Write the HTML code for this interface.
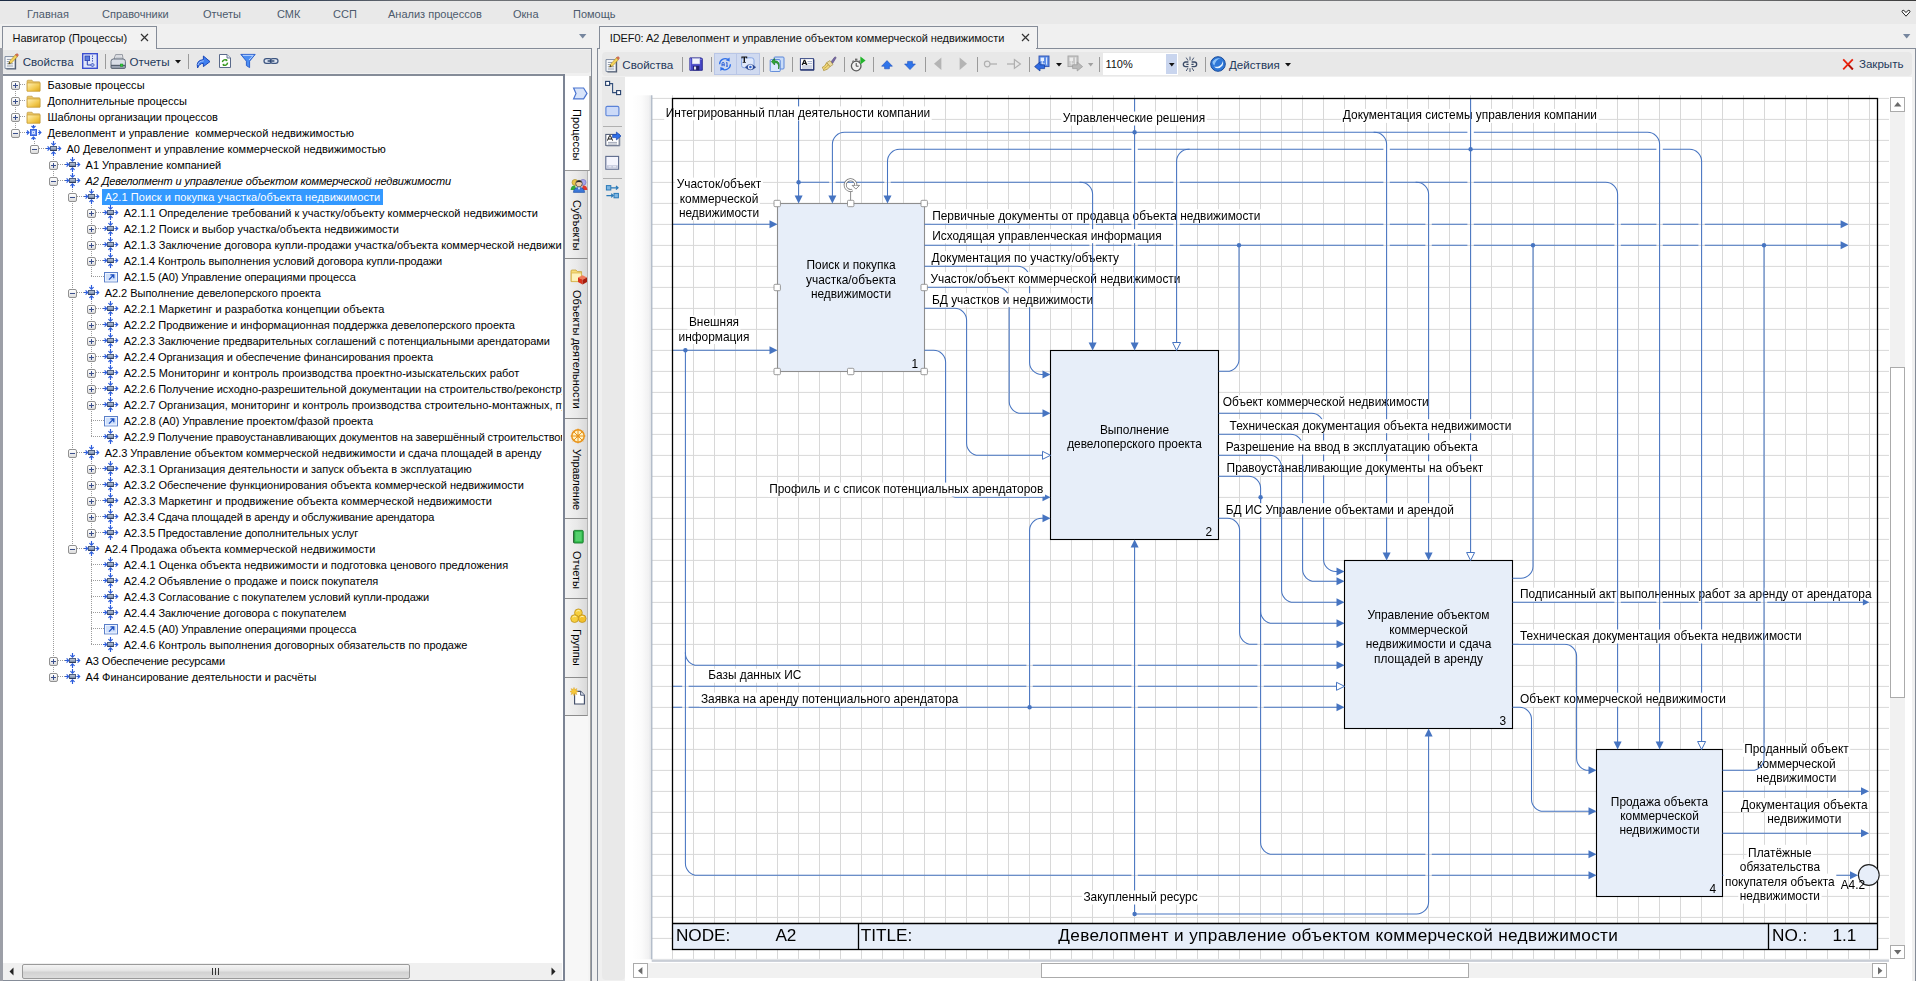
<!DOCTYPE html><html lang="ru"><head><meta charset="utf-8"><title>IDEF0</title><style>

*{box-sizing:border-box;margin:0;padding:0}
html,body{width:1916px;height:981px;overflow:hidden}
body{position:relative;background:#f0f0f0;font-family:"Liberation Sans",Arial,sans-serif;font-size:11px;color:#000;line-height:13px}
.a{position:absolute}
.t{position:absolute;white-space:pre;line-height:13px;height:13px}
.menu{color:#4c5a6c}
.tb{color:#1e395b;font-size:11.6px}
.sep{position:absolute;width:1px;background:#9a9a9a}
.row{position:absolute;left:0;height:16px;white-space:pre}
.ex{position:absolute;width:9px;height:9px;border:1px solid #919191;border-radius:2px;background:linear-gradient(#fff,#dcdcdc)}
.ex:before{content:"";position:absolute;left:1px;top:3px;width:5px;height:1px;background:#3a4f8c}
.ex.p:after{content:"";position:absolute;left:3px;top:1px;width:1px;height:5px;background:#3a4f8c}
.hd{position:absolute;height:1px;background-image:linear-gradient(90deg,#9c9c9c 50%,transparent 50%);background-size:2px 1px}
.vd{position:absolute;width:1px;background-image:linear-gradient(#9c9c9c 50%,transparent 50%);background-size:1px 2px}
.vt{position:absolute;left:565px;width:23px;border-bottom:1.5px solid #8c8c8c;border-right:1px solid #b4b4b4;background:linear-gradient(90deg,#f3f3f3,#e9e9e9 55%,#d9d9d9)}
.vtx{position:absolute;left:569.6px;width:13px;writing-mode:vertical-rl;white-space:pre;line-height:13px;font-size:11px}
.sb{position:absolute;background:#fff;border:1px solid #ababab}

</style></head><body>
<div class="a" style="left:0;top:0;width:1916px;height:24px;background:#e9e9e9"></div><div class="a" style="left:0;top:0;width:1916px;height:1.3px;background:linear-gradient(90deg,#1c2c44 0,#2b3a50 280px,#6d7075 420px,#77787a 1700px,#3a3a3a 1916px)"></div><div class="t menu" style="left:27px;top:8px">Главная</div><div class="t menu" style="left:102px;top:8px">Справочники</div><div class="t menu" style="left:203px;top:8px">Отчеты</div><div class="t menu" style="left:277px;top:8px">СМК</div><div class="t menu" style="left:333px;top:8px">ССП</div><div class="t menu" style="left:388px;top:8px">Анализ процессов</div><div class="t menu" style="left:513px;top:8px">Окна</div><div class="t menu" style="left:573px;top:8px">Помощь</div><svg class="a" style="left:1900.6px;top:9px" width="10" height="9" viewBox="0 0 10 9"><path d="M1 2.8Q1 .9 2.8 1.4L5 3.5 7.2 1.4Q9 .9 9 2.8L5 7.2Z" fill="#fff" stroke="#222" stroke-width="1"/></svg>
<div class="a" style="left:2px;top:26px;width:155px;height:24px;border:1.3px solid #858c98;border-bottom:none;background:#f2f2f2"></div><div class="t" style="left:12.5px;top:31.5px;color:#111">Навигатор (Процессы)</div><svg class="a" style="left:140px;top:33px" width="9" height="9"><path d="M1 1L8 8M8 1L1 8" stroke="#333" stroke-width="1.2"/></svg><svg class="a" style="left:578.5px;top:33.6px" width="8" height="5"><path d="M0 0H7.4L3.7 4.4Z" fill="#76869e"/></svg><div class="a" style="left:598.6px;top:26px;width:439px;height:24px;border:1.3px solid #858c98;border-bottom:none;background:#f2f2f2"></div><div class="t" style="left:609.7px;top:31.5px;color:#111;letter-spacing:-0.06px">IDEF0: A2 Девелопмент и управление объектом коммерческой недвижимости</div><svg class="a" style="left:1021px;top:33px" width="9" height="9"><path d="M1 1L8 8M8 1L1 8" stroke="#333" stroke-width="1.2"/></svg><svg class="a" style="left:1902.8px;top:33.6px" width="8" height="5"><path d="M0 0H7.4L3.7 4.4Z" fill="#76869e"/></svg>
<div class="a" style="left:1.5px;top:48.3px;width:590.5px;height:940px;border:1.4px solid #858c98;border-left-width:1.5px;background:#f0f0f0"></div><div class="a" style="left:3.3px;top:47px;width:152.4px;height:3px;background:#f2f2f2"></div><div class="a" style="left:3px;top:49.7px;width:587.5px;height:23.8px;background:#e8e8e8;border-radius:0 0 4px 0"></div><div class="a" style="left:596.8px;top:48.3px;width:1319px;height:940px;border:1.4px solid #858c98;background:#f0f0f0"></div><div class="a" style="left:599.9px;top:47px;width:436.4px;height:3px;background:#f2f2f2"></div><div class="a" style="left:601.5px;top:52px;width:1310.5px;height:24.3px;background:#e8e8e8;border-radius:4px"></div><div class="a" style="left:601.5px;top:76.6px;width:23px;height:903px;background:#e9e9e9;border-radius:0 0 4px 4px"></div><div class="a" style="left:624.5px;top:76.6px;width:1287.5px;height:905px;background:#fff"></div>
<svg class="a" style="left:4.2px;top:52.7px" width="16" height="17" viewBox="0 0 16 17"><path d="M1 3.6H11V15.4H1Z" fill="#fbfcfe" stroke="#7d8aa0" stroke-width="1"/><path d="M11.6 5V16H2.4" stroke="#4f5a6e" stroke-width="1.1" fill="none"/><path d="M2.8 6.4H7M2.8 8.6H6M2.8 10.8H9.2M2.8 13H9.2" stroke="#8e98a8" stroke-width="1"/><path d="M4.6 11L5.6 8.2L11.4 1.8L13.4 3.6L7.6 10Z" fill="#f3d25c" stroke="#a8841c" stroke-width=".6"/><path d="M11.4 1.8L12.2 1Q13.2 .4 14 1.2Q14.6 2 14 2.9L13.4 3.6Z" fill="#e2775a" stroke="#a8482c" stroke-width=".5"/><path d="M4.6 11L5.3 9L6.6 10.2Z" fill="#222"/></svg><div class="t tb" style="left:22.7px;top:54.5px">Свойства</div><svg class="a" style="left:81.8px;top:52.9px" width="16" height="16" viewBox="0 0 16 16"><rect x=".7" y=".7" width="14.6" height="14.6" fill="#dfe6fa" stroke="#3a4fd0" stroke-width="1.4"/><rect x="3" y="3" width="4.6" height="4.6" fill="#5c7fe0" stroke="#2a3fb0" stroke-width=".8"/><path d="M5.3 7.6V12H9" stroke="#2a3fb0" stroke-width="1" fill="none"/><path d="M10.5 2.5V9" stroke="#2a3fb0" stroke-width="1" stroke-dasharray="1.2 1.2"/><path d="M10.5 10L12.4 12L10.5 14L8.6 12Z" fill="#9db3f0" stroke="#2a3fb0" stroke-width=".7"/></svg><div class="sep" style="left:105px;top:54px;height:15px"></div><svg class="a" style="left:109.7px;top:53px" width="16" height="16" viewBox="0 0 16 16"><path d="M4 6L5.6 1.6H12.4L13 6Z" fill="#fafafa" stroke="#7a808c" stroke-width=".8"/><path d="M5.8 3H11.6M5.4 4.4H12" stroke="#aab0bc" stroke-width=".7"/><path d="M1 8.4Q1 6 3.4 6H13Q15.4 6 15.4 8.4V12.4H1Z" fill="#d9dde6" stroke="#5a6474" stroke-width=".9"/><path d="M1 12.4H15.4V14.4Q15.4 15.4 14.4 15.4H2Q1 15.4 1 14.4Z" fill="#9aa2b2" stroke="#4a5464" stroke-width=".9"/><rect x="10.3" y="11" width="2.6" height="2.4" fill="#2fd03a" stroke="#178a20" stroke-width=".5"/></svg><div class="t tb" style="left:129.4px;top:54.5px">Отчеты</div><svg class="a" style="left:175px;top:60px" width="7" height="4"><path d="M0 0H6L3 3.4Z" fill="#111"/></svg><div class="sep" style="left:188px;top:54px;height:15px"></div><svg class="a" style="left:194.5px;top:52.5px" width="16" height="16" viewBox="0 0 16 16"><path d="M2.6 15Q0.6 7.4 8.4 6.6V3L15 8.6L8.4 13.6V10.4Q4.4 10.2 2.6 15Z" fill="#3f7ff0" stroke="#1b47b8" stroke-width="1"/><path d="M3 12Q3.4 8.4 8.8 7.8" stroke="#a9c8ff" stroke-width="1" fill="none"/></svg><svg class="a" style="left:216.5px;top:53px" width="16" height="16" viewBox="0 0 16 16"><path d="M2.5 1.5H10L13.5 5V14.5H2.5Z" fill="#fff" stroke="#5a6a8a" stroke-width="1"/><path d="M10 1.5V5H13.5" fill="#e4e9f4" stroke="#5a6a8a" stroke-width=".9"/><path d="M5.4 9.2A2.8 2.8 0 0 1 10 7.4M10.6 9.6A2.8 2.8 0 0 1 6 11.6" stroke="#3a9a22" stroke-width="1.4" fill="none"/><path d="M9 6L10.8 7.6L8.8 8.6Z M7 13L5.2 11.4L7.2 10.4Z" fill="#3a9a22"/></svg><svg class="a" style="left:240.2px;top:53px" width="16" height="16" viewBox="0 0 16 16"><path d="M.8 1.4H15.2L9.6 8.2V14.6L6.4 12.6V8.2Z" fill="#4b8df2" stroke="#2458c8" stroke-width=".9"/><path d="M2.8 2.4H13.2L9 7" stroke="#b9d4ff" stroke-width="1" fill="none"/></svg><svg class="a" style="left:262.6px;top:53px" width="16" height="16" viewBox="0 0 16 16"><g fill="#dfe6f2" stroke="#3e5680" stroke-width="1.25"><rect x="1" y="5.6" width="7.6" height="4.8" rx="2.4"/><rect x="7.4" y="5.6" width="7.6" height="4.8" rx="2.4"/></g><path d="M4.6 8H11.4" stroke="#27406a" stroke-width="1.4"/></svg>
<svg width="0" height="0" style="position:absolute"><defs>
<linearGradient id="fg" x1="0" y1="0" x2="1" y2="1"><stop offset="0" stop-color="#fff1b8"/><stop offset=".6" stop-color="#f2c94e"/><stop offset="1" stop-color="#d9a520"/></linearGradient>
<g id="i-folder" transform="translate(0,1.6)"><path d="M1 2.6Q1 1.6 2 1.6H6L7.4 3.2H13.4Q14 3.2 14 4V12.4H1Z" fill="#e8c465" stroke="#b8923a" stroke-width=".6"/><path d="M1.2 4.4H14V12.6H1.2Z" fill="url(#fg)" stroke="#c89a2c" stroke-width=".6"/></g>
<linearGradient id="pg" x1="0" y1="0" x2="0" y2="1"><stop offset="0" stop-color="#c5cfdf"/><stop offset="1" stop-color="#6d7f9e"/></linearGradient>
<g id="i-proc" stroke="#2b5cdc" fill="none" stroke-width="1.15" stroke-linejoin="miter"><rect x="4.5" y="5.5" width="6" height="4" fill="url(#pg)" stroke="#4e5f80" stroke-width="1"/><path d="M4.5 9.5H10.5" stroke="#2d3c5c" stroke-width="1"/><path d="M0 7.5H3.6M1.6 5.4L3.7 7.5L1.6 9.6"/><path d="M11.4 7.5H15M12.6 5.4L14.7 7.5L12.6 9.6"/><path d="M7.5 0V4.2M5.4 2.2L7.5 4.3L9.6 2.2"/><path d="M7.5 15V10.8M5.4 12.8L7.5 10.7L9.6 12.8"/></g>
<g id="i-model" stroke="#2b5cdc" fill="none" stroke-width="1.15"><rect x="4.5" y="4.5" width="6" height="6" fill="#6a8eec" stroke="#3a63dc" stroke-width="1"/><rect x="6.5" y="6.5" width="2" height="2" fill="#6a8eec" stroke="#d6e2fd" stroke-width="1"/><path d="M0 7.5H3M1 5.5L3 7.5L1 9.5"/><path d="M12 7.5H15M12.8 5.4L14.9 7.5L12.8 9.6"/><path d="M7.5 0V3M5.5 1L7.5 3L9.5 1"/><path d="M7.5 15V12M5.5 14L7.5 12L9.5 14"/></g>
<g id="i-link"><rect x="1.5" y="3.5" width="13" height="9.4" fill="#cfe0fb" stroke="#5a7fc8" stroke-width="1"/><rect x="2.5" y="4.5" width="11" height="7.4" fill="none" stroke="#eef4ff" stroke-width="1"/><path d="M6 10.6L10.6 6M7.4 5.8H10.8V9.2" stroke="#1d4fc0" stroke-width="1.3" fill="none"/></g>
</defs></svg><div class="a" style="left:0px;top:73.6px;width:565px;height:2.4px;background:#858c98"></div><div class="a" style="left:563.4px;top:74px;width:1.6px;height:907px;background:#7c8494"></div><div class="a" style="left:0px;top:979.6px;width:565px;height:1.4px;background:#858c98"></div><div class="a" style="left:0px;top:48px;width:2.6px;height:933px;background:#9c9fa7"></div><div class="a" style="left:3px;top:76px;width:560.4px;height:903.6px;background:#fff"></div><div class="a" style="left:3px;top:76px;width:558.7px;height:903.6px;background:#fff;overflow:hidden"><div class="a" style="left:-3px;top:-76px;width:566px;height:906px"><div class="vd" style="left:34px;top:141px;height:8px"></div><div class="vd" style="left:53px;top:157px;height:520px"></div><div class="vd" style="left:72px;top:189px;height:360px"></div><div class="vd" style="left:91px;top:205px;height:72px"></div><div class="vd" style="left:91px;top:301px;height:136px"></div><div class="vd" style="left:91px;top:461px;height:72px"></div><div class="vd" style="left:91px;top:557px;height:88px"></div><div class="vd" style="left:15px;top:85px;height:48px"></div><div class="hd" style="left:20px;top:84px;width:6px"></div><div class="ex p" style="left:11px;top:81px"></div><svg class="a" style="left:26px;top:77px" width="16" height="16"><use href="#i-folder"/></svg><div class="t" style="left:47.5px;top:78.5px;letter-spacing:0.033px;">Базовые процессы</div><div class="hd" style="left:20px;top:100px;width:6px"></div><div class="ex p" style="left:11px;top:97px"></div><svg class="a" style="left:26px;top:93px" width="16" height="16"><use href="#i-folder"/></svg><div class="t" style="left:47.5px;top:94.5px;letter-spacing:-0.010px;">Дополнительные процессы</div><div class="hd" style="left:20px;top:116px;width:6px"></div><div class="ex p" style="left:11px;top:113px"></div><svg class="a" style="left:26px;top:109px" width="16" height="16"><use href="#i-folder"/></svg><div class="t" style="left:47.5px;top:110.5px;letter-spacing:-0.074px;">Шаблоны организации процессов</div><div class="hd" style="left:20px;top:132px;width:8px"></div><div class="ex" style="left:11px;top:129px"></div><svg class="a" style="left:26px;top:125px" width="16" height="16"><use href="#i-model"/></svg><div class="t" style="left:47.5px;top:126.5px;letter-spacing:0.032px;">Девелопмент и управление  коммерческой недвижимостью</div><div class="hd" style="left:39px;top:148px;width:8px"></div><div class="ex" style="left:30px;top:145px"></div><svg class="a" style="left:46px;top:141px" width="16" height="16"><use href="#i-proc"/></svg><div class="t" style="left:66.5px;top:142.5px;letter-spacing:0.020px;">A0 Девелопмент и управление коммерческой недвижимостью</div><div class="hd" style="left:58px;top:164px;width:8px"></div><div class="ex p" style="left:49px;top:161px"></div><svg class="a" style="left:65px;top:157px" width="16" height="16"><use href="#i-proc"/></svg><div class="t" style="left:85.6px;top:158.5px;letter-spacing:-0.013px;">A1 Управление компанией</div><div class="hd" style="left:58px;top:180px;width:8px"></div><div class="ex" style="left:49px;top:177px"></div><svg class="a" style="left:65px;top:173px" width="16" height="16"><use href="#i-proc"/></svg><div class="t" style="left:85.6px;top:174.5px;letter-spacing:-0.136px;font-style:italic;">A2 Девелопмент и управление объектом коммерческой недвижимости</div><div class="hd" style="left:77px;top:196px;width:8px"></div><div class="ex" style="left:68px;top:193px"></div><svg class="a" style="left:84px;top:189px" width="16" height="16"><use href="#i-proc"/></svg><div class="t" style="left:102.1px;top:189.0px;letter-spacing:0.084px;color:#fff;background:#3399ff;padding:1.5px 2.6px 1.5px 2.6px;height:16px;">A2.1 Поиск и покупка участка/объекта недвижимости</div><div class="hd" style="left:96px;top:212px;width:8px"></div><div class="ex p" style="left:87px;top:209px"></div><svg class="a" style="left:103px;top:205px" width="16" height="16"><use href="#i-proc"/></svg><div class="t" style="left:123.7px;top:206.5px;letter-spacing:0.014px;">A2.1.1 Определение требований к участку/объекту коммерческой недвижимости</div><div class="hd" style="left:96px;top:228px;width:8px"></div><div class="ex p" style="left:87px;top:225px"></div><svg class="a" style="left:103px;top:221px" width="16" height="16"><use href="#i-proc"/></svg><div class="t" style="left:123.7px;top:222.5px;letter-spacing:0.038px;">A2.1.2 Поиск и выбор участка/объекта недвижимости</div><div class="hd" style="left:96px;top:244px;width:8px"></div><div class="ex p" style="left:87px;top:241px"></div><svg class="a" style="left:103px;top:237px" width="16" height="16"><use href="#i-proc"/></svg><div class="t" style="left:123.7px;top:238.5px;letter-spacing:0.034px;">A2.1.3 Заключение договора купли-продажи участка/объекта коммерческой недвижимости</div><div class="hd" style="left:96px;top:260px;width:8px"></div><div class="ex p" style="left:87px;top:257px"></div><svg class="a" style="left:103px;top:253px" width="16" height="16"><use href="#i-proc"/></svg><div class="t" style="left:123.7px;top:254.5px;letter-spacing:-0.062px;">A2.1.4 Контроль выполнения условий договора купли-продажи</div><div class="hd" style="left:91px;top:276px;width:13px"></div><svg class="a" style="left:103px;top:269px" width="16" height="16"><use href="#i-link"/></svg><div class="t" style="left:123.7px;top:270.5px;letter-spacing:-0.095px;">A2.1.5 (A0) Управление операциями процесса</div><div class="hd" style="left:77px;top:292px;width:8px"></div><div class="ex" style="left:68px;top:289px"></div><svg class="a" style="left:84px;top:285px" width="16" height="16"><use href="#i-proc"/></svg><div class="t" style="left:104.7px;top:286.5px;letter-spacing:-0.033px;">A2.2 Выполнение девелоперского проекта</div><div class="hd" style="left:96px;top:308px;width:8px"></div><div class="ex p" style="left:87px;top:305px"></div><svg class="a" style="left:103px;top:301px" width="16" height="16"><use href="#i-proc"/></svg><div class="t" style="left:123.7px;top:302.5px;letter-spacing:0.024px;">A2.2.1 Маркетинг и разработка концепции объекта</div><div class="hd" style="left:96px;top:324px;width:8px"></div><div class="ex p" style="left:87px;top:321px"></div><svg class="a" style="left:103px;top:317px" width="16" height="16"><use href="#i-proc"/></svg><div class="t" style="left:123.7px;top:318.5px;letter-spacing:-0.032px;">A2.2.2 Продвижение и информационная поддержка девелоперского проекта</div><div class="hd" style="left:96px;top:340px;width:8px"></div><div class="ex p" style="left:87px;top:337px"></div><svg class="a" style="left:103px;top:333px" width="16" height="16"><use href="#i-proc"/></svg><div class="t" style="left:123.7px;top:334.5px;letter-spacing:-0.066px;">A2.2.3 Заключение предварительных соглашений с потенциальными арендаторами</div><div class="hd" style="left:96px;top:356px;width:8px"></div><div class="ex p" style="left:87px;top:353px"></div><svg class="a" style="left:103px;top:349px" width="16" height="16"><use href="#i-proc"/></svg><div class="t" style="left:123.7px;top:350.5px;letter-spacing:-0.068px;">A2.2.4 Организация и обеспечение финансирования проекта</div><div class="hd" style="left:96px;top:372px;width:8px"></div><div class="ex p" style="left:87px;top:369px"></div><svg class="a" style="left:103px;top:365px" width="16" height="16"><use href="#i-proc"/></svg><div class="t" style="left:123.7px;top:366.5px;letter-spacing:0.034px;">A2.2.5 Мониторинг и контроль производства проектно-изыскательских работ</div><div class="hd" style="left:96px;top:388px;width:8px"></div><div class="ex p" style="left:87px;top:385px"></div><svg class="a" style="left:103px;top:381px" width="16" height="16"><use href="#i-proc"/></svg><div class="t" style="left:123.7px;top:382.5px;letter-spacing:-0.043px;">A2.2.6 Получение исходно-разрешительной документации на строительство/реконструкцию</div><div class="hd" style="left:96px;top:404px;width:8px"></div><div class="ex p" style="left:87px;top:401px"></div><svg class="a" style="left:103px;top:397px" width="16" height="16"><use href="#i-proc"/></svg><div class="t" style="left:123.7px;top:398.5px;letter-spacing:-0.006px;">A2.2.7 Организация, мониторинг и контроль производства строительно-монтажных, пусконаладочных работ</div><div class="hd" style="left:91px;top:420px;width:13px"></div><svg class="a" style="left:103px;top:413px" width="16" height="16"><use href="#i-link"/></svg><div class="t" style="left:123.7px;top:414.5px;letter-spacing:0.001px;">A2.2.8 (A0) Управление проектом/фазой проекта</div><div class="hd" style="left:91px;top:436px;width:13px"></div><svg class="a" style="left:103px;top:429px" width="16" height="16"><use href="#i-proc"/></svg><div class="t" style="left:123.7px;top:430.5px;letter-spacing:-0.109px;">A2.2.9 Получение правоустанавливающих документов на завершённый строительством объект</div><div class="hd" style="left:77px;top:452px;width:8px"></div><div class="ex" style="left:68px;top:449px"></div><svg class="a" style="left:84px;top:445px" width="16" height="16"><use href="#i-proc"/></svg><div class="t" style="left:104.7px;top:446.5px;letter-spacing:-0.007px;">A2.3 Управление объектом коммерческой недвижимости и сдача площадей в аренду</div><div class="hd" style="left:96px;top:468px;width:8px"></div><div class="ex p" style="left:87px;top:465px"></div><svg class="a" style="left:103px;top:461px" width="16" height="16"><use href="#i-proc"/></svg><div class="t" style="left:123.7px;top:462.5px;letter-spacing:0.018px;">A2.3.1 Организация деятельности и запуск объекта в эксплуатацию</div><div class="hd" style="left:96px;top:484px;width:8px"></div><div class="ex p" style="left:87px;top:481px"></div><svg class="a" style="left:103px;top:477px" width="16" height="16"><use href="#i-proc"/></svg><div class="t" style="left:123.7px;top:478.5px;letter-spacing:-0.021px;">A2.3.2 Обеспечение функционирования объекта коммерческой недвижимости</div><div class="hd" style="left:96px;top:500px;width:8px"></div><div class="ex p" style="left:87px;top:497px"></div><svg class="a" style="left:103px;top:493px" width="16" height="16"><use href="#i-proc"/></svg><div class="t" style="left:123.7px;top:494.5px;letter-spacing:0.038px;">A2.3.3 Маркетинг и продвижение объекта коммерческой недвижимости</div><div class="hd" style="left:96px;top:516px;width:8px"></div><div class="ex p" style="left:87px;top:513px"></div><svg class="a" style="left:103px;top:509px" width="16" height="16"><use href="#i-proc"/></svg><div class="t" style="left:123.7px;top:510.5px;letter-spacing:-0.164px;">A2.3.4 Сдача площадей в аренду и обслуживание арендатора</div><div class="hd" style="left:96px;top:532px;width:8px"></div><div class="ex p" style="left:87px;top:529px"></div><svg class="a" style="left:103px;top:525px" width="16" height="16"><use href="#i-proc"/></svg><div class="t" style="left:123.7px;top:526.5px;letter-spacing:-0.098px;">A2.3.5 Предоставление дополнительных услуг</div><div class="hd" style="left:77px;top:548px;width:8px"></div><div class="ex" style="left:68px;top:545px"></div><svg class="a" style="left:84px;top:541px" width="16" height="16"><use href="#i-proc"/></svg><div class="t" style="left:104.7px;top:542.5px;letter-spacing:0.042px;">A2.4 Продажа объекта коммерческой недвижимости</div><div class="hd" style="left:91px;top:564px;width:13px"></div><svg class="a" style="left:103px;top:557px" width="16" height="16"><use href="#i-proc"/></svg><div class="t" style="left:123.7px;top:558.5px;letter-spacing:0.016px;">A2.4.1 Оценка объекта недвижимости и подготовка ценового предложения</div><div class="hd" style="left:91px;top:580px;width:13px"></div><svg class="a" style="left:103px;top:573px" width="16" height="16"><use href="#i-proc"/></svg><div class="t" style="left:123.7px;top:574.5px;letter-spacing:-0.032px;">A2.4.2 Объявление о продаже и поиск покупателя</div><div class="hd" style="left:91px;top:596px;width:13px"></div><svg class="a" style="left:103px;top:589px" width="16" height="16"><use href="#i-proc"/></svg><div class="t" style="left:123.7px;top:590.5px;letter-spacing:-0.050px;">A2.4.3 Согласование с покупателем условий купли-продажи</div><div class="hd" style="left:91px;top:612px;width:13px"></div><svg class="a" style="left:103px;top:605px" width="16" height="16"><use href="#i-proc"/></svg><div class="t" style="left:123.7px;top:606.5px;letter-spacing:-0.024px;">A2.4.4 Заключение договора с покупателем</div><div class="hd" style="left:91px;top:628px;width:13px"></div><svg class="a" style="left:103px;top:621px" width="16" height="16"><use href="#i-link"/></svg><div class="t" style="left:123.7px;top:622.5px;letter-spacing:-0.084px;">A2.4.5 (A0) Управление операциями процесса</div><div class="hd" style="left:91px;top:644px;width:13px"></div><svg class="a" style="left:103px;top:637px" width="16" height="16"><use href="#i-proc"/></svg><div class="t" style="left:123.7px;top:638.5px;letter-spacing:-0.012px;">A2.4.6 Контроль выполнения договорных обязательств по продаже</div><div class="hd" style="left:58px;top:660px;width:8px"></div><div class="ex p" style="left:49px;top:657px"></div><svg class="a" style="left:65px;top:653px" width="16" height="16"><use href="#i-proc"/></svg><div class="t" style="left:85.6px;top:654.5px;letter-spacing:-0.124px;">A3 Обеспечение ресурсами</div><div class="hd" style="left:58px;top:676px;width:8px"></div><div class="ex p" style="left:49px;top:673px"></div><svg class="a" style="left:65px;top:669px" width="16" height="16"><use href="#i-proc"/></svg><div class="t" style="left:85.6px;top:670.5px;letter-spacing:-0.014px;">A4 Финансирование деятельности и расчёты</div></div><div class="a" style="left:0;top:887px;width:561px;height:16.6px;background:#f0f0f0"></div><svg class="a" style="left:6px;top:890.6px" width="5" height="9"><path d="M4.5 0.5V8.5L0.5 4.5Z" fill="#222"/></svg><svg class="a" style="left:548px;top:890.6px" width="5" height="9"><path d="M0.5 0.5V8.5L4.5 4.5Z" fill="#222"/></svg><div class="a" style="left:19px;top:888px;width:388px;height:14.6px;border:1px solid #9a9a9a;border-radius:2px;background:linear-gradient(#f4f4f4,#e4e4e4 45%,#d2d2d2 55%,#dcdcdc)"></div><div class="a" style="left:209px;top:891.6px;width:7px;height:7px;background:linear-gradient(90deg,#333 1px,transparent 1px) 0 0/3px 7px"></div></div>
<div class="a" style="left:565px;top:76px;width:25.6px;height:905px;background:#f4f4f4"></div><div class="a" style="left:589.8px;top:76px;width:1.2px;height:905px;background:#a4a4a4"></div><div class="a" style="left:565px;top:76px;width:25.4px;height:94.6px;background:#fff;border-right:1px solid #b4b4b4;border-bottom:1.4px solid #9a9a9a"></div><div class="vt" style="top:170.6px;height:88.4px"></div><div class="vt" style="top:259px;height:160px"></div><div class="vt" style="top:419px;height:100px"></div><div class="vt" style="top:519px;height:80px"></div><div class="vt" style="top:599px;height:79.2px"></div><div class="vt" style="top:678.2px;height:38.2px"></div><div class="a" style="left:565px;top:716.4px;width:23px;height:300px;background:#f7f7f7"></div><div class="vtx" style="top:109.2px">Процессы</div><div class="vtx" style="top:200px">Субъекты</div><div class="vtx" style="top:290.3px">Объекты деятельности</div><div class="vtx" style="top:448.5px">Управление</div><div class="vtx" style="top:551px">Отчеты</div><div class="vtx" style="top:629.2px">Группы</div><svg class="a" style="left:571.5px;top:86px" width="16" height="15" viewBox="0 0 16 15"><path d="M1.6 2H11.6L15 7.4L11.6 12.8H1.6L4 7.4Z" fill="#d8e4fa" stroke="#4a74d0" stroke-width="1.2"/></svg><svg class="a" style="left:569.5px;top:177px" width="18" height="16" viewBox="0 0 18 16"><circle cx="5" cy="5.4" r="3" fill="#e8c44a" stroke="#a88a22" stroke-width=".6"/><circle cx="13" cy="5.4" r="3" fill="#a6a6ec" stroke="#6a6ab8" stroke-width=".6"/><path d="M0.6 13Q1 8.4 5 8.6L6.6 13Z" fill="#35a83a"/><path d="M17.4 13Q17 8.4 13 8.6L11.4 13Z" fill="#e0382c"/><circle cx="9" cy="6.6" r="3.3" fill="#f2cfa6" stroke="#333" stroke-width=".7"/><path d="M5.8 5.6Q9 1.6 12.2 5.6Q9 4.6 5.8 5.6Z" fill="#222"/><path d="M3.4 15.4Q3.6 10.4 9 10.4Q14.4 10.4 14.6 15.4Z" fill="#3c78d8" stroke="#1a4aa0" stroke-width=".6"/><path d="M7.8 10.4L9 13L10.2 10.4Z" fill="#fff"/></svg><svg class="a" style="left:569.5px;top:267.5px" width="18" height="17" viewBox="0 0 18 17"><path d="M1 3Q1 2 2 2H6L7.4 3.6H11.6V13.6H1Z" fill="#f6dc7a" stroke="#c09a2c" stroke-width=".7"/><path d="M1.4 5H11.4V13.4H1.4Z" fill="#fdf3bd" stroke="#d2aa38" stroke-width=".6"/><path d="M8 9.4L12.6 7.2L17 9.4L12.6 11.8Z" fill="#f07a5a"/><path d="M8 9.4V14L12.6 16.4V11.8Z" fill="#d8321c"/><path d="M17 9.4V14L12.6 16.4V11.8Z" fill="#a81c0c"/></svg><svg class="a" style="left:570px;top:427.5px" width="16" height="16" viewBox="0 0 16 16"><circle cx="8" cy="8" r="6.2" fill="#fff3c6" stroke="#e8941c" stroke-width="1.5"/><circle cx="8" cy="8" r="1.6" fill="#e8941c"/><path d="M8 0.6V15.4M0.6 8H15.4M2.8 2.8L13.2 13.2M13.2 2.8L2.8 13.2" stroke="#e8941c" stroke-width="1"/></svg><svg class="a" style="left:571px;top:529px" width="14" height="16" viewBox="0 0 14 16"><rect x="2.6" y="1.4" width="9.6" height="12.6" rx="1" fill="#2fb84a" stroke="#157a28" stroke-width=".9"/><path d="M4.4 3H10.6V12.2H4.4Z" fill="#55d06c"/><path d="M2 3H3.4M2 5H3.4M2 7H3.4M2 9H3.4M2 11H3.4M2 13H3.4" stroke="#333" stroke-width=".8"/></svg><svg class="a" style="left:569.5px;top:607.5px" width="17" height="16" viewBox="0 0 17 16"><g stroke="#b88a14" stroke-width=".7"><circle cx="8.4" cy="4.8" r="3.9" fill="#f6cf3e"/><circle cx="4.6" cy="10.6" r="3.9" fill="#f6cf3e"/><circle cx="12.2" cy="10.6" r="3.9" fill="#f2c02c"/></g><path d="M6.4 3.4Q8 1.8 10 3M2.6 9.2Q4.2 7.6 6.2 8.8M10.2 9.2Q11.8 7.6 13.8 8.8" stroke="#fff3b0" stroke-width="1" fill="none"/></svg><svg class="a" style="left:570px;top:686.5px" width="16" height="18" viewBox="0 0 16 18"><path d="M4.6 4.4H10.6L14.4 8.2V17H4.6Z" fill="#fff" stroke="#3e4a66" stroke-width="1.1"/><path d="M10.6 4.4V8.2H14.4" fill="#dfe6f4" stroke="#3e4a66" stroke-width=".9"/><path d="M4 0.4L4.8 2.6L7 1.6L6 3.8L8.2 4.6L6 5.4L7 7.6L4.8 6.6L4 8.8L3.2 6.6L1 7.6L2 5.4L-0.2 4.6L2 3.8L1 1.6L3.2 2.6Z" fill="#f6c83a" stroke="#d89a14" stroke-width=".4"/></svg>
<svg class="a" style="left:604.6px;top:55.5px" width="16" height="17" viewBox="0 0 16 17"><path d="M1 3.6H11V15.4H1Z" fill="#fbfcfe" stroke="#7d8aa0" stroke-width="1"/><path d="M11.6 5V16H2.4" stroke="#4f5a6e" stroke-width="1.1" fill="none"/><path d="M2.8 6.4H7M2.8 8.6H6M2.8 10.8H9.2M2.8 13H9.2" stroke="#8e98a8" stroke-width="1"/><path d="M4.6 11L5.6 8.2L11.4 1.8L13.4 3.6L7.6 10Z" fill="#f3d25c" stroke="#a8841c" stroke-width=".6"/><path d="M11.4 1.8L12.2 1Q13.2 .4 14 1.2Q14.6 2 14 2.9L13.4 3.6Z" fill="#e2775a" stroke="#a8482c" stroke-width=".5"/><path d="M4.6 11L5.3 9L6.6 10.2Z" fill="#222"/></svg><div class="t tb" style="left:622.3px;top:57.5px">Свойства</div><div class="sep" style="left:682px;top:57px;height:15px"></div><svg class="a" style="left:689px;top:56.7px" width="14.2" height="14.2" viewBox="0 0 16 16"><path d="M1 1H14L15 2V15H1Z" fill="#4848c8" stroke="#22228a" stroke-width="1"/><path d="M1.5 1.5V14.5" stroke="#8a8af0" stroke-width="1"/><rect x="3.6" y="1.6" width="8.6" height="6.2" fill="#f2f4fb" stroke="#c0c4e0" stroke-width=".5"/><rect x="4.6" y="10" width="7" height="5" fill="#20206a"/><rect x="5.6" y="10.8" width="2.4" height="3.4" fill="#e6e6f2"/><rect x="13" y="2.2" width="1" height="1" fill="#c0c0f0"/></svg><div class="sep" style="left:711px;top:57px;height:15px"></div><div class="a" style="left:714px;top:52.8px;width:45.8px;height:21.8px;background:#d0daf0;border:1px solid #b9c6e6"></div><div class="a" style="left:736.2px;top:53px;width:1px;height:21.4px;background:#b9c6e6"></div><svg class="a" style="left:717.2px;top:56px" width="16" height="16" viewBox="0 0 16 16"><path d="M2.6 8.2A5.6 5.6 0 0 1 11 3.4" stroke="#2f6fe8" stroke-width="1.3" fill="none"/><path d="M12.6 1.4L12.6 5.4L8.8 4.2Z" fill="#2f6fe8"/><path d="M13.4 8.2A5.6 5.6 0 0 1 5 13" stroke="#2f6fe8" stroke-width="1.3" fill="none"/><path d="M3.4 15L3.4 11L7.2 12.2Z" fill="#2f6fe8"/><path d="M5 10.2V7.6Q5 6.4 6.1 6.4Q7.2 6.4 7.2 7.6V10.2M5 8.8H7.2M9 7.2L10 6.4V10.2M9 10.2H11" stroke="#2a5fd8" stroke-width="1" fill="none"/></svg><svg class="a" style="left:739.6px;top:56px" width="16" height="16" viewBox="0 0 16 16"><rect x="1.6" y="1.8" width="12.4" height="10" rx="2.4" fill="#dfe8fa" stroke="#86a6e4" stroke-width="1"/><path d="M1.4 .6H7.2V2.4H6.6Q6.4 1.5 5.6 1.5H5V6H5.9V6.8H2.7V6H3.6V1.5H3Q2.2 1.5 2 2.4H1.4Z" fill="#111"/><path d="M5.4 11.2Q10.2 5.6 15.6 11.2Q10.2 16.4 5.4 11.2Z" fill="#2a4a9c" stroke="#1c3478" stroke-width=".6"/><circle cx="10.4" cy="11" r="2.5" fill="#e6eefc"/><circle cx="10.4" cy="11" r="1.3" fill="#2f62d0"/></svg><div class="sep" style="left:763px;top:57px;height:15px"></div><svg class="a" style="left:768.6px;top:55.5px" width="16" height="16" viewBox="0 0 16 16"><rect x="5" y="1" width="10" height="12" rx="1" fill="#c9dcf8" stroke="#5a86d8" stroke-width="1"/><rect x="1.2" y="3.6" width="10" height="12" rx="1" fill="#dbe8fc" stroke="#5a86d8" stroke-width="1"/><path d="M9.6 13Q10.6 6.6 5.6 6.6V9L2.4 5.6L5.6 2.6V4.8Q12 4.8 9.6 13Z" fill="#2fa836" stroke="#18751e" stroke-width=".7"/></svg><div class="sep" style="left:792px;top:57px;height:15px"></div><svg class="a" style="left:798.6px;top:56px" width="16" height="16" viewBox="0 0 16 16"><rect x="1.4" y="2.6" width="13" height="11" fill="#fff" stroke="#3a4a86" stroke-width="1"/><path d="M1.4 14.2H14.9V3.4" stroke="#1c2c6c" stroke-width="1" fill="none"/><path d="M8.6 5.6H13M8.6 7.6H13M3 10H13M3 12H13" stroke="#9aa6c4" stroke-width=".9"/><path d="M2.6 9L4.8 3.8H6.2L8.4 9H6.9L6.5 7.9H4.4L4 9ZM4.8 6.8H6.1L5.5 5.1Z" fill="#111"/></svg><svg class="a" style="left:820.6px;top:56px" width="16" height="16" viewBox="0 0 16 16"><path d="M9.6 6.4L13.6 1.2Q14.6 .6 15.2 1.6L11.4 7.8Z" fill="#7a6aa8" stroke="#4a3f70" stroke-width=".6"/><path d="M5.6 6.6L9 4.6L12 8.6L9 10.6Z" fill="#e9d9a0" stroke="#a08838" stroke-width=".6"/><path d="M1 11.6Q4 10.6 5.6 6.8L9 10.6Q6.6 14 2.6 14.6Q2.8 12.6 1 11.6Z" fill="#f0d77a" stroke="#a8892c" stroke-width=".7"/><path d="M3 12.4Q5.6 11.4 7 9" stroke="#c2a442" stroke-width=".8" fill="none"/></svg><div class="sep" style="left:844px;top:57px;height:15px"></div><svg class="a" style="left:849.8px;top:56px" width="16" height="16" viewBox="0 0 16 16"><circle cx="6.2" cy="10" r="4.8" fill="#f2f2f2" stroke="#5a5a5a" stroke-width="1.3"/><path d="M6.2 7V10.2H8.6" stroke="#444" stroke-width="1" fill="none"/><rect x="5" y="2.6" width="2.4" height="2" fill="#6a6a6a"/><path d="M2.4 5.6L3.6 4.6M10 5.6L8.8 4.6" stroke="#5a5a5a" stroke-width="1.1"/><path d="M10.4 .6L15.6 4.4L10.4 8.4Z" fill="#23b42c"/></svg><div class="sep" style="left:873px;top:57px;height:15px"></div><svg class="a" style="left:879.4px;top:56.6px" width="16" height="16" viewBox="0 0 16 16"><path d="M8 3.6L13.4 9.2H10.4V11.8H5.6V9.2H2.6Z" fill="#2f74ea" stroke="#1a4cb8" stroke-width=".6"/></svg><svg class="a" style="left:901.6px;top:56.6px" width="16" height="16" viewBox="0 0 16 16"><path d="M8 12.6L13.4 7H10.4V4.4H5.6V7H2.6Z" fill="#2f74ea" stroke="#1a4cb8" stroke-width=".6"/></svg><div class="sep" style="left:925px;top:57px;height:15px"></div><svg class="a" style="left:930px;top:56px" width="16" height="16" viewBox="0 0 16 16"><path d="M11.4 1.6V14L4 7.8Z" fill="#b4b4b4"/></svg><svg class="a" style="left:955px;top:56px" width="16" height="16" viewBox="0 0 16 16"><path d="M4.6 1.6V14L12 7.8Z" fill="#b4b4b4"/></svg><div class="sep" style="left:977px;top:57px;height:15px"></div><svg class="a" style="left:983.4px;top:56px" width="16" height="16" viewBox="0 0 16 16"><circle cx="4.2" cy="8" r="2.8" fill="none" stroke="#b0b0b0" stroke-width="1.2"/><path d="M7 8H14" stroke="#b0b0b0" stroke-width="1.3"/></svg><svg class="a" style="left:1005.6px;top:56px" width="16" height="16" viewBox="0 0 16 16"><path d="M1 8H8.6" stroke="#b0b0b0" stroke-width="1.3"/><path d="M8.4 3.6L14.4 8L8.4 12.4Z" fill="none" stroke="#b0b0b0" stroke-width="1.2"/></svg><div class="sep" style="left:1029px;top:57px;height:15px"></div><svg class="a" style="left:1033.6px;top:55.4px" width="16" height="17" viewBox="0 0 16 17"><rect x="5" y="1" width="10" height="10.6" fill="#5f8fe8" stroke="#2c50b0" stroke-width=".9"/><rect x="6.6" y="2.6" width="3.4" height="3.4" fill="#e8f0ff"/><path d="M8.2 6V9H11M12.6 2.4V9.6" stroke="#e8f0ff" stroke-width="1" fill="none"/><path d="M.6 11.6L6 7V9.8H10.6V13.6H6V16Z" fill="#2f6ae0" stroke="#123a98" stroke-width=".7"/></svg><svg class="a" style="left:1055.7px;top:63px" width="7" height="4"><path d="M0 0H6L3 3.4Z" fill="#111"/></svg><svg class="a" style="left:1066.6px;top:55.4px" width="16" height="17" viewBox="0 0 16 17"><rect x="1" y="1" width="10" height="10.6" fill="#c9c9c9" stroke="#a4a4a4" stroke-width=".9"/><rect x="2.6" y="2.6" width="3.4" height="3.4" fill="#ededed"/><path d="M4.2 6V9H7M8.6 2.4V9.6" stroke="#ededed" stroke-width="1" fill="none"/><path d="M15.6 11.6L10.2 7V9.8H5.6V13.6H10.2V16Z" fill="#b9b9b9" stroke="#9a9a9a" stroke-width=".7"/></svg><svg class="a" style="left:1088px;top:63px" width="6.4" height="4"><path d="M0 0H5.4L2.7 3.4Z" fill="#a0a0a0"/></svg><div class="sep" style="left:1099px;top:57px;height:15px"></div><div class="a" style="left:1103px;top:53.4px;width:74.8px;height:22px;background:#fff"></div><div class="a" style="left:1166px;top:54.4px;width:11.4px;height:20px;background:#c9d5ee"></div><div class="t" style="left:1105.4px;top:57.6px;color:#111">110%</div><svg class="a" style="left:1168.8px;top:63px" width="6.6" height="4"><path d="M0 0H5.6L2.8 3.4Z" fill="#111"/></svg><svg class="a" style="left:1181.8px;top:56px" width="16" height="16" viewBox="0 0 16 16"><g fill="none" stroke="#3a4a66" stroke-width="1.3"><path d="M6.4 6H3.6A2.3 2.3 0 0 0 3.6 10.6H6.4"/><path d="M9.6 6H12.4A2.3 2.3 0 0 1 12.4 10.6H9.6"/><path d="M4.4 8.3H6.6M9.4 8.3H11.6"/></g><path d="M8 .6V4.4M8 12.2V16M4.2 1.6L6 4.6M11.8 1.6L10 4.6M4.2 15L6 12M11.8 15L10 12" stroke="#3a4a66" stroke-width=".9"/></svg><div class="sep" style="left:1205px;top:57px;height:15px"></div><svg class="a" style="left:1210px;top:56px" width="16" height="16" viewBox="0 0 16 16"><circle cx="8" cy="8" r="7.3" fill="#2f78d8" stroke="#174a9a" stroke-width="1"/><path d="M2.4 6Q5 1.6 10.4 2.2Q5.6 3.4 4.4 9.6Q2.6 8.6 2.4 6Z" fill="#9fd0ff" opacity=".85"/><path d="M4 10.4Q8 14.6 12.6 9.4Q13.8 7 12.6 5Q12.6 9 8.4 10.4Q6 11.2 4 10.4Z" fill="#e8f4ff"/></svg><div class="t tb" style="left:1229px;top:57.5px">Действия</div><svg class="a" style="left:1285.2px;top:63px" width="7" height="4"><path d="M0 0H6L3 3.4Z" fill="#111"/></svg><svg class="a" style="left:1842.4px;top:58.4px" width="12" height="13" viewBox="0 0 12 13"><path d="M1.2 1.4L10.8 11.4M10.8 1.4L1.2 11.4" stroke="#e8210c" stroke-width="1.8" stroke-linecap="butt"/><path d="M6.6 7L10.8 11.4" stroke="#b01208" stroke-width="1.8"/></svg><div class="t tb" style="left:1858.9px;top:57.3px">Закрыть</div>
<svg class="a" style="left:604px;top:79px" width="18" height="18" viewBox="0 0 18 18"><path d="M4 4.6H8.6V13.6H13" stroke="#34507c" stroke-width="1.1" fill="none"/><rect x="1.6" y="2.4" width="4" height="4" fill="#fff" stroke="#26406c" stroke-width="1.1"/><rect x="12.6" y="11.6" width="4" height="4" fill="#fff" stroke="#26406c" stroke-width="1.1"/></svg><svg class="a" style="left:604px;top:102px" width="18" height="18" viewBox="0 0 18 18"><rect x="1.9" y="4.4" width="13" height="9.4" rx="1.4" fill="#ccdaf8" stroke="#5a82d8" stroke-width="1.1"/></svg><div class="a" style="left:603px;top:125.8px;width:19px;height:1px;background:#b0b0b0"></div><svg class="a" style="left:604px;top:130px" width="18" height="18" viewBox="0 0 18 18"><rect x="1.8" y="4.4" width="13.4" height="11" fill="#fff" stroke="#4a5670" stroke-width="1"/><path d="M2.4 15.9H15.8V5" stroke="#8a93a6" stroke-width="1" fill="none"/><path d="M3.4 10.6L5.6 5.6H6.4L8.6 10.6M4.4 9H7.6" stroke="#111" stroke-width="1" fill="none"/><path d="M4 12.4H13M4 14H13" stroke="#8a93a6" stroke-width=".8"/><path d="M8.6 4.6H12.4V2L17 6L12.4 10V7.6H8.6Z" fill="#2f6fe8" stroke="#1a48b0" stroke-width=".7"/></svg><svg class="a" style="left:604px;top:154px" width="18" height="18" viewBox="0 0 18 18"><rect x="1.8" y="2.4" width="12.8" height="12.8" fill="#f4f5fd" stroke="#5d6b8c" stroke-width="1.1"/><rect x="2.6" y="11.2" width="11.2" height="3.2" fill="#c4c9dc"/><path d="M4.6 12.8H7.4M9 12.8H12" stroke="#eef0f8" stroke-width="1"/></svg><div class="a" style="left:603px;top:177.6px;width:19px;height:1px;background:#b0b0b0"></div><svg class="a" style="left:604px;top:182px" width="18" height="18" viewBox="0 0 18 18"><g fill="#7fb6e2" stroke="#2a7ab8" stroke-width="1"><rect x="2.4" y="3.6" width="4.4" height="4.4"/><rect x="10" y="11.4" width="4.4" height="4.4"/></g><path d="M7 5.8H14.4M12 4L14 5.8L12 7.6M2.4 13.6H9M7.2 11.8L9.2 13.6L7.2 15.4" stroke="#2a7ab8" stroke-width="1.2" fill="none"/></svg>
<svg style="position:absolute;left:625px;top:77px;will-change:transform" width="1265" height="886" viewBox="625 77 1265 886" font-family="Liberation Sans, Arial, sans-serif" fill="#000">
<defs><pattern id="grid" x="651.0" y="97.9" width="21" height="21" patternUnits="userSpaceOnUse"><path d="M0.5 0V21M0 0.5H21" stroke="#d8d8d8" stroke-width="1" fill="none"/></pattern><linearGradient id="shl" x1="0" x2="1" y1="0" y2="0"><stop offset="0" stop-color="#fff"/><stop offset=".5" stop-color="#fbfbfb"/><stop offset=".85" stop-color="#f1f1f2"/><stop offset="1" stop-color="#dcdfe3"/></linearGradient></defs>
<rect x="632" y="95.3" width="19.7" height="864" fill="url(#shl)"/>
<rect x="651.7" y="959.3" width="1237.3" height="2.6" fill="#c9ced6"/>
<rect x="651.7" y="95.3" width="1237.3" height="864" fill="#fff"/>
<svg x="651.7" y="95.3" width="1237.3" height="864" viewBox="651.7 95.3 1237.3 864"><rect x="640" y="90" width="1260" height="880" fill="url(#grid)"/></svg>
<rect x="651.2" y="95.3" width="1.2" height="864" fill="#a9b3c3"/>
<rect x="672.5" y="923.5" width="1205.0" height="26.0" fill="#e7eef9"/>
<path d="M672.5 923.5H1877.5M858.5 923.5V949.5M1768.5 923.5V949.5" stroke="#000" stroke-width="1.3" fill="none"/>
<text x="675.9" y="940.8" font-size="17.2">NODE:</text>
<text x="775.4" y="940.8" font-size="17.2">A2</text>
<text x="860.7" y="940.8" font-size="17.2">TITLE:</text>
<text x="1058.3" y="940.8" font-size="17.2" letter-spacing="0.34">Девелопмент и управление объектом коммерческой недвижимости</text>
<text x="1772.0" y="940.8" font-size="17.2">NO.:</text>
<text x="1832.5" y="940.8" font-size="17.2">1.1</text>
<rect x="777.5" y="203.5" width="147.0" height="168.0" fill="#e7eef9" stroke="#8e8e8e" stroke-width="1.1"/><text x="851.0" y="269.4" font-size="11.90" text-anchor="middle">Поиск и покупка</text><text x="851.0" y="283.8" font-size="11.90" text-anchor="middle">участка/объекта</text><text x="851.0" y="298.2" font-size="11.90" text-anchor="middle">недвижимости</text><text x="918.2" y="367.5" font-size="11.90" text-anchor="end">1</text>
<rect x="1050.5" y="350.5" width="168.0" height="189.0" fill="#e7eef9" stroke="#000" stroke-width="1.1"/><text x="1134.5" y="433.7" font-size="11.90" text-anchor="middle">Выполнение</text><text x="1134.5" y="448.1" font-size="11.90" text-anchor="middle">девелоперского проекта</text><text x="1212.2" y="535.5" font-size="11.90" text-anchor="end">2</text>
<rect x="1344.5" y="560.5" width="168.0" height="168.0" fill="#e7eef9" stroke="#000" stroke-width="1.1"/><text x="1428.5" y="619.4" font-size="11.90" text-anchor="middle">Управление объектом</text><text x="1428.5" y="633.8" font-size="11.90" text-anchor="middle">коммерческой</text><text x="1428.5" y="648.2" font-size="11.90" text-anchor="middle">недвижимости и сдача</text><text x="1428.5" y="662.6" font-size="11.90" text-anchor="middle">площадей в аренду</text><text x="1506.2" y="724.5" font-size="11.90" text-anchor="end">3</text>
<rect x="1596.5" y="749.5" width="126.0" height="147.0" fill="#e7eef9" stroke="#000" stroke-width="1.1"/><text x="1659.5" y="805.5" font-size="11.90" text-anchor="middle">Продажа объекта</text><text x="1659.5" y="819.9" font-size="11.90" text-anchor="middle">коммерческой</text><text x="1659.5" y="834.3" font-size="11.90" text-anchor="middle">недвижимости</text><text x="1716.2" y="892.5" font-size="11.90" text-anchor="end">4</text>
<path d="M672.5 224.3 L770.5 224.3" fill="none" stroke="#4674c1" stroke-width="1.05"/>
<polygon points="777.5,224.3 769.5,228.3 769.5,220.3" fill="#4674c1"/>
<rect x="675.2" y="177.6" width="87.7" height="14.0" fill="#fff"/><rect x="678.2" y="192.0" width="81.7" height="14.0" fill="#fff"/><rect x="677.4" y="206.4" width="83.3" height="14.0" fill="#fff"/><text x="719.0" y="188.1" font-size="11.90" text-anchor="middle">Участок/объект</text><text x="719.0" y="202.5" font-size="11.90" text-anchor="middle">коммерческой</text><text x="719.0" y="216.9" font-size="11.90" text-anchor="middle">недвижимости</text>
<path d="M672.5 350.3 L770.5 350.3" fill="none" stroke="#4674c1" stroke-width="1.05"/>
<polygon points="777.5,350.3 769.5,354.3 769.5,346.3" fill="#4674c1"/>
<path d="M685.4 350.3 L685.4 863.3 C685.40 869.93 690.77 875.30 697.40 875.30 L1131.4 875.3 M1137.8 875.3 L1425.4 875.3 M1431.8 875.3 L1589.5 875.3" fill="none" stroke="#4674c1" stroke-width="1.05"/>
<polygon points="1596.5,875.3 1588.5,879.3 1588.5,871.3" fill="#4674c1"/>
<path d="M685.4 652.3 L685.4 653.3 C685.40 659.93 690.77 665.30 697.40 665.30 L1026.4 665.3 M1032.8 665.3 L1131.4 665.3 M1137.8 665.3 L1257.4 665.3 M1263.8 665.3 L1337.5 665.3" fill="none" stroke="#4674c1" stroke-width="1.05"/>
<polygon points="1344.5,665.3 1336.5,669.3 1336.5,661.3" fill="#4674c1"/>
<rect x="687.4" y="315.6" width="53.1" height="14.0" fill="#fff"/><rect x="677.0" y="330.0" width="74.0" height="14.0" fill="#fff"/><text x="714.0" y="326.1" font-size="11.90" text-anchor="middle">Внешняя</text><text x="714.0" y="340.5" font-size="11.90" text-anchor="middle">информация</text>
<path d="M672.5 686.3 L682.2 686.3 M688.6 686.3 L1026.4 686.3 M1032.8 686.3 L1131.4 686.3 M1137.8 686.3 L1257.4 686.3 M1263.8 686.3 L1337.5 686.3" fill="none" stroke="#4674c1" stroke-width="1.05"/>
<polygon points="1344.5,686.3 1336.5,690.3 1336.5,682.3" fill="#fff" stroke="#4674c1" stroke-width="1"/>
<rect x="706.7" y="668.7" width="96.3" height="14.0" fill="#fff"/><text x="708.2" y="679.2" font-size="11.90">Базы данных ИС</text>
<path d="M672.5 707.3 L682.2 707.3 M688.6 707.3 L1131.4 707.3 M1137.8 707.3 L1257.4 707.3 M1263.8 707.3 L1337.5 707.3" fill="none" stroke="#4674c1" stroke-width="1.05"/>
<polygon points="1344.5,707.3 1336.5,711.3 1336.5,703.3" fill="#4674c1"/>
<path d="M1029.6 707.3 L1029.6 530.3 C1029.60 523.67 1034.97 518.30 1041.60 518.30 L1043.5 518.3" fill="none" stroke="#4674c1" stroke-width="1.05"/>
<polygon points="1050.5,518.3 1042.5,522.3 1042.5,514.3" fill="#4674c1"/>
<rect x="699.4" y="692.6" width="260.7" height="14.0" fill="#fff"/><text x="700.9" y="703.1" font-size="11.90">Заявка на аренду потенциального арендатора</text>
<path d="M924.5 224.3 L1089.4 224.3 M1095.8 224.3 L1131.4 224.3 M1137.8 224.3 L1173.4 224.3 M1179.8 224.3 L1383.4 224.3 M1389.8 224.3 L1425.4 224.3 M1431.8 224.3 L1467.4 224.3 M1473.8 224.3 L1614.4 224.3 M1620.8 224.3 L1656.4 224.3 M1662.8 224.3 L1698.4 224.3 M1704.8 224.3 L1841.6 224.3" fill="none" stroke="#4674c1" stroke-width="1.05"/>
<polygon points="1848.6,224.3 1840.6,228.3 1840.6,220.3" fill="#4674c1"/>
<rect x="930.7" y="209.2" width="331.5" height="14.0" fill="#fff"/><text x="932.2" y="219.7" font-size="11.90">Первичные документы от продавца объекта недвижимости</text>
<path d="M924.5 245.3 L1089.4 245.3 M1095.8 245.3 L1131.4 245.3 M1137.8 245.3 L1173.4 245.3 M1179.8 245.3 L1383.4 245.3 M1389.8 245.3 L1425.4 245.3 M1431.8 245.3 L1467.4 245.3 M1473.8 245.3 L1614.4 245.3 M1620.8 245.3 L1656.4 245.3 M1662.8 245.3 L1698.4 245.3 M1704.8 245.3 L1841.6 245.3" fill="none" stroke="#4674c1" stroke-width="1.05"/>
<polygon points="1848.6,245.3 1840.6,249.3 1840.6,241.3" fill="#4674c1"/>
<path d="M924.5 266.3 L1017.6 266.3 C1024.23 266.30 1029.60 271.67 1029.60 278.30 L1029.6 362.5 C1029.60 369.13 1034.97 374.50 1041.60 374.50 L1043.5 374.5" fill="none" stroke="#4674c1" stroke-width="1.05"/>
<polygon points="1050.5,374.5 1042.5,378.5 1042.5,370.5" fill="#4674c1"/>
<rect x="930.0" y="251.0" width="190.6" height="14.0" fill="#fff"/><text x="931.5" y="261.5" font-size="11.90">Документация по участку/объекту</text>
<path d="M924.5 287.3 L997.2 287.3 C1003.83 287.30 1009.20 292.67 1009.20 299.30 L1009.2 401.3 C1009.20 407.93 1014.57 413.30 1021.20 413.30 L1043.5 413.3" fill="none" stroke="#4674c1" stroke-width="1.05"/>
<polygon points="1050.5,413.3 1042.5,417.3 1042.5,409.3" fill="#4674c1"/>
<rect x="928.9" y="272.1" width="253.2" height="14.0" fill="#fff"/><text x="930.4" y="282.6" font-size="11.90">Участок/объект коммерческой недвижимости</text>
<path d="M924.5 308.3 L954.6 308.3 C961.23 308.30 966.60 313.67 966.60 320.30 L966.6 443.3 C966.60 449.93 971.97 455.30 978.60 455.30 L1043.5 455.3" fill="none" stroke="#4674c1" stroke-width="1.05"/>
<polygon points="1050.5,455.3 1042.5,459.3 1042.5,451.3" fill="#fff" stroke="#4674c1" stroke-width="1"/>
<rect x="930.5" y="293.2" width="164.2" height="14.0" fill="#fff"/><text x="932.0" y="303.7" font-size="11.90">БД участков и недвижимости</text>
<path d="M924.5 350.3 L933.6 350.3 C940.23 350.30 945.60 355.67 945.60 362.30 L945.6 485.3 C945.60 491.93 950.97 497.30 957.60 497.30 L1043.5 497.3" fill="none" stroke="#4674c1" stroke-width="1.05"/>
<polygon points="1050.5,497.3 1042.5,501.3 1042.5,493.3" fill="#4674c1"/>
<rect x="767.7" y="482.6" width="277.3" height="14.0" fill="#fff"/><text x="769.2" y="493.1" font-size="11.90">Профиль и с список потенциальных арендаторов</text>
<path d="M1218.5 371.3 L1227.0 371.3 C1233.63 371.30 1239.00 365.93 1239.00 359.30 L1239.0 245.3" fill="none" stroke="#4674c1" stroke-width="1.05"/>

<path d="M1218.5 413.3 L1311.6 413.3 C1318.23 413.30 1323.60 418.67 1323.60 425.30 L1323.6 559.4 C1323.60 566.03 1328.97 571.40 1335.60 571.40 L1337.5 571.4" fill="none" stroke="#4674c1" stroke-width="1.05"/>
<polygon points="1344.5,571.4 1336.5,575.4 1336.5,567.4" fill="#4674c1"/>
<rect x="1221.3" y="395.3" width="209.1" height="14.0" fill="#fff"/><text x="1222.8" y="405.8" font-size="11.90">Объект коммерческой недвижимости</text>
<rect x="1518.5" y="587.7" width="354.8" height="14.0" fill="#fff"/><text x="1520.0" y="598.2" font-size="11.90">Подписанный акт выполненных работ за аренду от арендатора</text>
<path d="M798.6 98.5 L798.6 196.5" fill="none" stroke="#4674c1" stroke-width="1.05"/>
<polygon points="798.6,203.5 794.6,195.5 802.6,195.5" fill="#4674c1"/>
<path d="M798.6 182.3 L829.2 182.3 M835.6 182.3 L884.3 182.3 M890.7 182.3 L1131.4 182.3 M1137.8 182.3 L1173.4 182.3 M1179.8 182.3 L1383.4 182.3 M1389.8 182.3 L1467.4 182.3 M1473.8 182.3 L1605.6 182.3 C1612.23 182.30 1617.60 187.67 1617.60 194.30 L1617.6 742.5" fill="none" stroke="#4674c1" stroke-width="1.05"/>
<polygon points="1617.6,749.5 1613.6,741.5 1621.6,741.5" fill="#4674c1"/>
<path d="M1079.6 182.3 L1080.6 182.3 C1087.23 182.30 1092.60 187.67 1092.60 194.30 L1092.6 343.5" fill="none" stroke="#4674c1" stroke-width="1.05"/>
<polygon points="1092.6,350.5 1088.6,342.5 1096.6,342.5" fill="#4674c1"/>
<path d="M1415.6 182.3 L1416.6 182.3 C1423.23 182.30 1428.60 187.67 1428.60 194.30 L1428.6 553.5" fill="none" stroke="#4674c1" stroke-width="1.05"/>
<polygon points="1428.6,560.5 1424.6,552.5 1432.6,552.5" fill="#4674c1"/>
<rect x="664.2" y="106.4" width="267.5" height="14.0" fill="#fff"/><text x="798.0" y="116.9" font-size="11.90" text-anchor="middle">Интегрированный план деятельности компании</text>
<path d="M1134.6 98.5 L1134.6 343.5" fill="none" stroke="#4674c1" stroke-width="1.05"/>
<polygon points="1134.6,350.5 1130.6,342.5 1138.6,342.5" fill="#4674c1"/>
<path d="M1134.6 132.3 L844.4 132.3 C837.77 132.30 832.40 137.67 832.40 144.30 L832.4 196.5" fill="none" stroke="#4674c1" stroke-width="1.05"/>
<polygon points="832.4,203.5 828.4,195.5 836.4,195.5" fill="#4674c1"/>
<path d="M1134.6 132.3 L1467.4 132.3 M1473.8 132.3 L1647.6 132.3 C1654.23 132.30 1659.60 137.67 1659.60 144.30 L1659.6 742.5" fill="none" stroke="#4674c1" stroke-width="1.05"/>
<polygon points="1659.6,749.5 1655.6,741.5 1663.6,741.5" fill="#4674c1"/>
<path d="M1373.6 132.3 L1374.6 132.3 C1381.23 132.30 1386.60 137.67 1386.60 144.30 L1386.6 553.5" fill="none" stroke="#4674c1" stroke-width="1.05"/>
<polygon points="1386.6,560.5 1382.6,552.5 1390.6,552.5" fill="#4674c1"/>
<rect x="1061.3" y="111.5" width="145.5" height="14.0" fill="#fff"/><text x="1134.0" y="122.0" font-size="11.90" text-anchor="middle">Управленческие решения</text>
<rect x="1341.3" y="108.9" width="257.3" height="14.0" fill="#fff"/><text x="1469.9" y="119.4" font-size="11.90" text-anchor="middle">Документация системы управления компании</text>
<path d="M1470.6 98.5 L1470.6 553.5" fill="none" stroke="#4674c1" stroke-width="1.05"/>
<polygon points="1470.6,560.5 1466.6,552.5 1474.6,552.5" fill="#fff" stroke="#4674c1" stroke-width="1"/>
<path d="M1470.6 149.3 L1389.8 149.3 M1383.4 149.3 L1137.8 149.3 M1131.4 149.3 L899.5 149.3 C892.87 149.30 887.50 154.67 887.50 161.30 L887.5 196.5" fill="none" stroke="#4674c1" stroke-width="1.05"/>
<polygon points="887.5,203.5 883.5,195.5 891.5,195.5" fill="#4674c1"/>
<path d="M1470.6 149.3 L1656.4 149.3 M1662.8 149.3 L1689.6 149.3 C1696.23 149.30 1701.60 154.67 1701.60 161.30 L1701.6 742.5" fill="none" stroke="#4674c1" stroke-width="1.05"/>
<polygon points="1701.6,749.5 1697.6,741.5 1705.6,741.5" fill="#fff" stroke="#4674c1" stroke-width="1"/>
<path d="M1189.6 149.3 L1188.6 149.3 C1181.97 149.30 1176.60 154.67 1176.60 161.30 L1176.6 343.5" fill="none" stroke="#4674c1" stroke-width="1.05"/>
<polygon points="1176.6,350.5 1172.6,342.5 1180.6,342.5" fill="#fff" stroke="#4674c1" stroke-width="1"/>
<rect x="930.7" y="229.2" width="232.6" height="14.0" fill="#fff"/><text x="932.2" y="239.7" font-size="11.90">Исходящая управленческая информация</text>
<rect x="1225.1" y="461.3" width="259.9" height="14.0" fill="#fff"/><text x="1226.6" y="471.8" font-size="11.90">Правоустанавливающие документы на объект</text>
<rect x="1228.1" y="419.2" width="284.9" height="14.0" fill="#fff"/><text x="1229.6" y="429.7" font-size="11.90">Техническая документация объекта недвижимости</text>
<path d="M1218.5 434.3 L1290.6 434.3 C1297.23 434.30 1302.60 439.67 1302.60 446.30 L1302.6 569.3 C1302.60 575.93 1307.97 581.30 1314.60 581.30 L1337.5 581.3" fill="none" stroke="#4674c1" stroke-width="1.05"/>
<polygon points="1344.5,581.3 1336.5,585.3 1336.5,577.3" fill="#4674c1"/>
<path d="M1218.5 476.3 L1248.6 476.3 C1255.23 476.30 1260.60 481.67 1260.60 488.30 L1260.6 611.3 C1260.60 617.93 1265.97 623.30 1272.60 623.30 L1337.5 623.3" fill="none" stroke="#4674c1" stroke-width="1.05"/>
<polygon points="1344.5,623.3 1336.5,627.3 1336.5,619.3" fill="#4674c1"/>
<path d="M1260.6 497.3 L1260.6 842.3 C1260.60 848.93 1265.97 854.30 1272.60 854.30 L1425.4 854.3 M1431.8 854.3 L1589.5 854.3" fill="none" stroke="#4674c1" stroke-width="1.05"/>
<polygon points="1596.5,854.3 1588.5,858.3 1588.5,850.3" fill="#4674c1"/>
<rect x="1224.3" y="440.5" width="255.2" height="14.0" fill="#fff"/><text x="1225.8" y="451.0" font-size="11.90">Разрешение на ввод в эксплуатацию объекта</text>
<rect x="1224.3" y="503.2" width="231.2" height="14.0" fill="#fff"/><text x="1225.8" y="513.7" font-size="11.90">БД ИС Управление объектами и арендой</text>
<path d="M1218.5 518.3 L1227.6 518.3 C1234.23 518.30 1239.60 523.67 1239.60 530.30 L1239.6 632.3 C1239.60 638.93 1244.97 644.30 1251.60 644.30 L1257.4 644.3 M1263.8 644.3 L1337.5 644.3" fill="none" stroke="#4674c1" stroke-width="1.05"/>
<polygon points="1344.5,644.3 1336.5,648.3 1336.5,640.3" fill="#4674c1"/>
<path d="M1218.5 455.3 L1269.6 455.3 C1276.23 455.30 1281.60 460.67 1281.60 467.30 L1281.6 590.3 C1281.60 596.93 1286.97 602.30 1293.60 602.30 L1337.5 602.3" fill="none" stroke="#4674c1" stroke-width="1.05"/>
<polygon points="1344.5,602.3 1336.5,606.3 1336.5,598.3" fill="#4674c1"/>
<path d="M1512.5 578.2 L1521.0 578.2 C1527.63 578.20 1533.00 572.83 1533.00 566.20 L1533.0 245.3" fill="none" stroke="#4674c1" stroke-width="1.05"/>

<path d="M1512.5 602.3 L1614.4 602.3 M1620.8 602.3 L1656.4 602.3 M1662.8 602.3 L1698.4 602.3 M1704.8 602.3 L1760.8 602.3 M1767.2 602.3 L1863.9 602.3" fill="none" stroke="#4674c1" stroke-width="1.05"/>
<polygon points="1869.4,602.3 1862.9,605.5 1862.9,599.0" fill="#4674c1"/>
<rect x="1518.5" y="692.7" width="209.1" height="14.0" fill="#fff"/><text x="1520.0" y="703.2" font-size="11.90">Объект коммерческой недвижимости</text>
<path d="M1512.5 644.3 L1564.6 644.3 C1571.23 644.30 1576.60 649.67 1576.60 656.30 L1576.6 758.3 C1576.60 764.93 1581.93 770.30 1588.50 770.30 L1589.5 770.3" fill="none" stroke="#4674c1" stroke-width="1.05"/>
<polygon points="1596.5,770.3 1588.5,774.3 1588.5,766.3" fill="#4674c1"/>
<rect x="1518.5" y="629.5" width="284.9" height="14.0" fill="#fff"/><text x="1520.0" y="640.0" font-size="11.90">Техническая документация объекта недвижимости</text>
<path d="M1512.5 707.3 L1519.5 707.3 C1526.13 707.30 1531.50 712.67 1531.50 719.30 L1531.5 799.3 C1531.50 805.93 1536.87 811.30 1543.50 811.30 L1589.5 811.3" fill="none" stroke="#4674c1" stroke-width="1.05"/>
<polygon points="1596.5,811.3 1588.5,815.3 1588.5,807.3" fill="#4674c1"/>
<path d="M1134.6 914.0 L1134.6 546.5" fill="none" stroke="#4674c1" stroke-width="1.05"/>
<polygon points="1134.6,539.5 1138.6,547.5 1130.6,547.5" fill="#4674c1"/>
<path d="M1134.6 914.0 L1416.6 914.0 C1423.23 914.00 1428.60 908.63 1428.60 902.00 L1428.6 735.5" fill="none" stroke="#4674c1" stroke-width="1.05"/>
<polygon points="1428.6,728.5 1432.6,736.5 1424.6,736.5" fill="#4674c1"/>
<rect x="1081.9" y="890.5" width="117.3" height="14.0" fill="#fff"/><text x="1083.4" y="901.0" font-size="11.90">Закупленный ресурс</text>
<path d="M1722.5 791.3 L1862.0 791.3" fill="none" stroke="#4674c1" stroke-width="1.05"/>
<polygon points="1869.0,791.3 1861.0,795.3 1861.0,787.3" fill="#4674c1"/>
<rect x="1742.6" y="742.8" width="107.6" height="14.0" fill="#fff"/><rect x="1755.6" y="757.2" width="81.7" height="14.0" fill="#fff"/><rect x="1754.8" y="771.6" width="83.3" height="14.0" fill="#fff"/><text x="1796.4" y="753.3" font-size="11.90" text-anchor="middle">Проданный объект</text><text x="1796.4" y="767.7" font-size="11.90" text-anchor="middle">коммерческой</text><text x="1796.4" y="782.1" font-size="11.90" text-anchor="middle">недвижимости</text>
<path d="M1722.5 770.3 L1752.0 770.3 C1758.63 770.30 1764.00 764.93 1764.00 758.30 L1764.0 245.3" fill="none" stroke="#4674c1" stroke-width="1.05"/>

<path d="M1722.5 833.3 L1862.0 833.3" fill="none" stroke="#4674c1" stroke-width="1.05"/>
<polygon points="1869.0,833.3 1861.0,837.3 1861.0,829.3" fill="#4674c1"/>
<rect x="1739.4" y="798.1" width="129.9" height="14.0" fill="#fff"/><rect x="1765.8" y="812.5" width="77.1" height="14.0" fill="#fff"/><text x="1804.3" y="808.6" font-size="11.90" text-anchor="middle">Документация объекта</text><text x="1804.3" y="823.0" font-size="11.90" text-anchor="middle">недвижимоти</text>
<path d="M1722.5 875.3 L1851.0 875.3" fill="none" stroke="#4674c1" stroke-width="1.05"/>
<polygon points="1858.0,875.3 1850.0,879.3 1850.0,871.3" fill="#4674c1"/>
<rect x="1746.6" y="844.8" width="66.6" height="15.6" fill="#fff"/><rect x="1738.2" y="859.2" width="83.3" height="15.6" fill="#fff"/><rect x="1723.5" y="873.6" width="112.8" height="15.6" fill="#fff"/><rect x="1738.3" y="888.0" width="83.3" height="15.6" fill="#fff"/><text x="1779.9" y="856.9" font-size="11.90" text-anchor="middle">Платёжные</text><text x="1779.9" y="871.3" font-size="11.90" text-anchor="middle">обязательства</text><text x="1779.9" y="885.7" font-size="11.90" text-anchor="middle">покупателя объекта</text><text x="1779.9" y="900.1" font-size="11.90" text-anchor="middle">недвижимости</text>
<circle cx="798.6" cy="182.3" r="2.2" fill="#4674c1"/>
<circle cx="1134.6" cy="132.3" r="2.2" fill="#4674c1"/>
<circle cx="1470.6" cy="149.3" r="2.2" fill="#4674c1"/>
<circle cx="685.4" cy="350.3" r="2.2" fill="#4674c1"/>
<circle cx="1029.6" cy="707.3" r="2.2" fill="#4674c1"/>
<circle cx="1239.0" cy="245.3" r="2.2" fill="#4674c1"/>
<circle cx="1260.6" cy="497.3" r="2.2" fill="#4674c1"/>
<circle cx="1533.0" cy="245.3" r="2.2" fill="#4674c1"/>
<circle cx="1134.6" cy="914.0" r="2.2" fill="#4674c1"/>
<circle cx="1764.0" cy="245.3" r="2.2" fill="#4674c1"/>
<rect x="672.5" y="98.5" width="1205.0" height="851.0" fill="none" stroke="#000" stroke-width="1.3"/>
<circle cx="1868.8" cy="875" r="10.4" fill="#e7eef9" stroke="#222" stroke-width="1.1"/>
<text x="1840.7" y="889.2" font-size="11.90">A4.2</text>
<path d="M850.6 191.5V203.5" stroke="#8e8e8e" stroke-width="1"/>
<rect x="774.0" y="200.3" width="6.4" height="6.4" rx="1" fill="#fff" stroke="#8e8e8e" stroke-width="0.9"/>
<rect x="774.0" y="284.3" width="6.4" height="6.4" rx="1" fill="#fff" stroke="#8e8e8e" stroke-width="0.9"/>
<rect x="774.0" y="368.3" width="6.4" height="6.4" rx="1" fill="#fff" stroke="#8e8e8e" stroke-width="0.9"/>
<rect x="847.5" y="200.3" width="6.4" height="6.4" rx="1" fill="#fff" stroke="#8e8e8e" stroke-width="0.9"/>
<rect x="847.5" y="368.3" width="6.4" height="6.4" rx="1" fill="#fff" stroke="#8e8e8e" stroke-width="0.9"/>
<rect x="921.0" y="200.3" width="6.4" height="6.4" rx="1" fill="#fff" stroke="#8e8e8e" stroke-width="0.9"/>
<rect x="921.0" y="284.3" width="6.4" height="6.4" rx="1" fill="#fff" stroke="#8e8e8e" stroke-width="0.9"/>
<rect x="921.0" y="368.3" width="6.4" height="6.4" rx="1" fill="#fff" stroke="#8e8e8e" stroke-width="0.9"/>
<path d="M855.85 185.50A5.35 5.35 0 1 0 852.40 190.10" fill="none" stroke="#707070" stroke-width="2.9"/>
<polygon points="852.15,185.40 859.55,185.40 855.85,189.10" fill="#fff" stroke="#707070" stroke-width="0.8"/>
<path d="M855.85 185.50A5.35 5.35 0 1 0 852.40 190.10" fill="none" stroke="#fff" stroke-width="1.4"/>
</svg>
<div class="a" style="left:1890.3px;top:97.3px;width:14.5px;height:862.2px;background:#f1f1f1"></div><div class="sb" style="left:1890.3px;top:97.3px;width:14.5px;height:14.5px"></div><svg class="a" style="left:1894px;top:102.4px" width="8" height="5"><path d="M0 4.4H7.4L3.7 0Z" fill="#6a6a6a"/></svg><div class="sb" style="left:1890.3px;top:945.2px;width:14.5px;height:14.3px"></div><svg class="a" style="left:1894px;top:950.4px" width="8" height="5"><path d="M0 0H7.4L3.7 4.4Z" fill="#6a6a6a"/></svg><div class="sb" style="left:1890.3px;top:367.4px;width:14.5px;height:330.3px"></div><div class="a" style="left:633.3px;top:963.4px;width:1253.5px;height:14.3px;background:#f1f1f1"></div><div class="sb" style="left:633.3px;top:963.4px;width:14.4px;height:14.3px"></div><svg class="a" style="left:638px;top:966.8px" width="5" height="8"><path d="M4.4 0V7.4L0 3.7Z" fill="#6a6a6a"/></svg><div class="sb" style="left:1872px;top:963.4px;width:14.8px;height:14.3px"></div><svg class="a" style="left:1877.6px;top:966.8px" width="5" height="8"><path d="M0 0V7.4L4.4 3.7Z" fill="#6a6a6a"/></svg><div class="sb" style="left:1041.3px;top:963.4px;width:428px;height:14.3px"></div>
</body></html>
